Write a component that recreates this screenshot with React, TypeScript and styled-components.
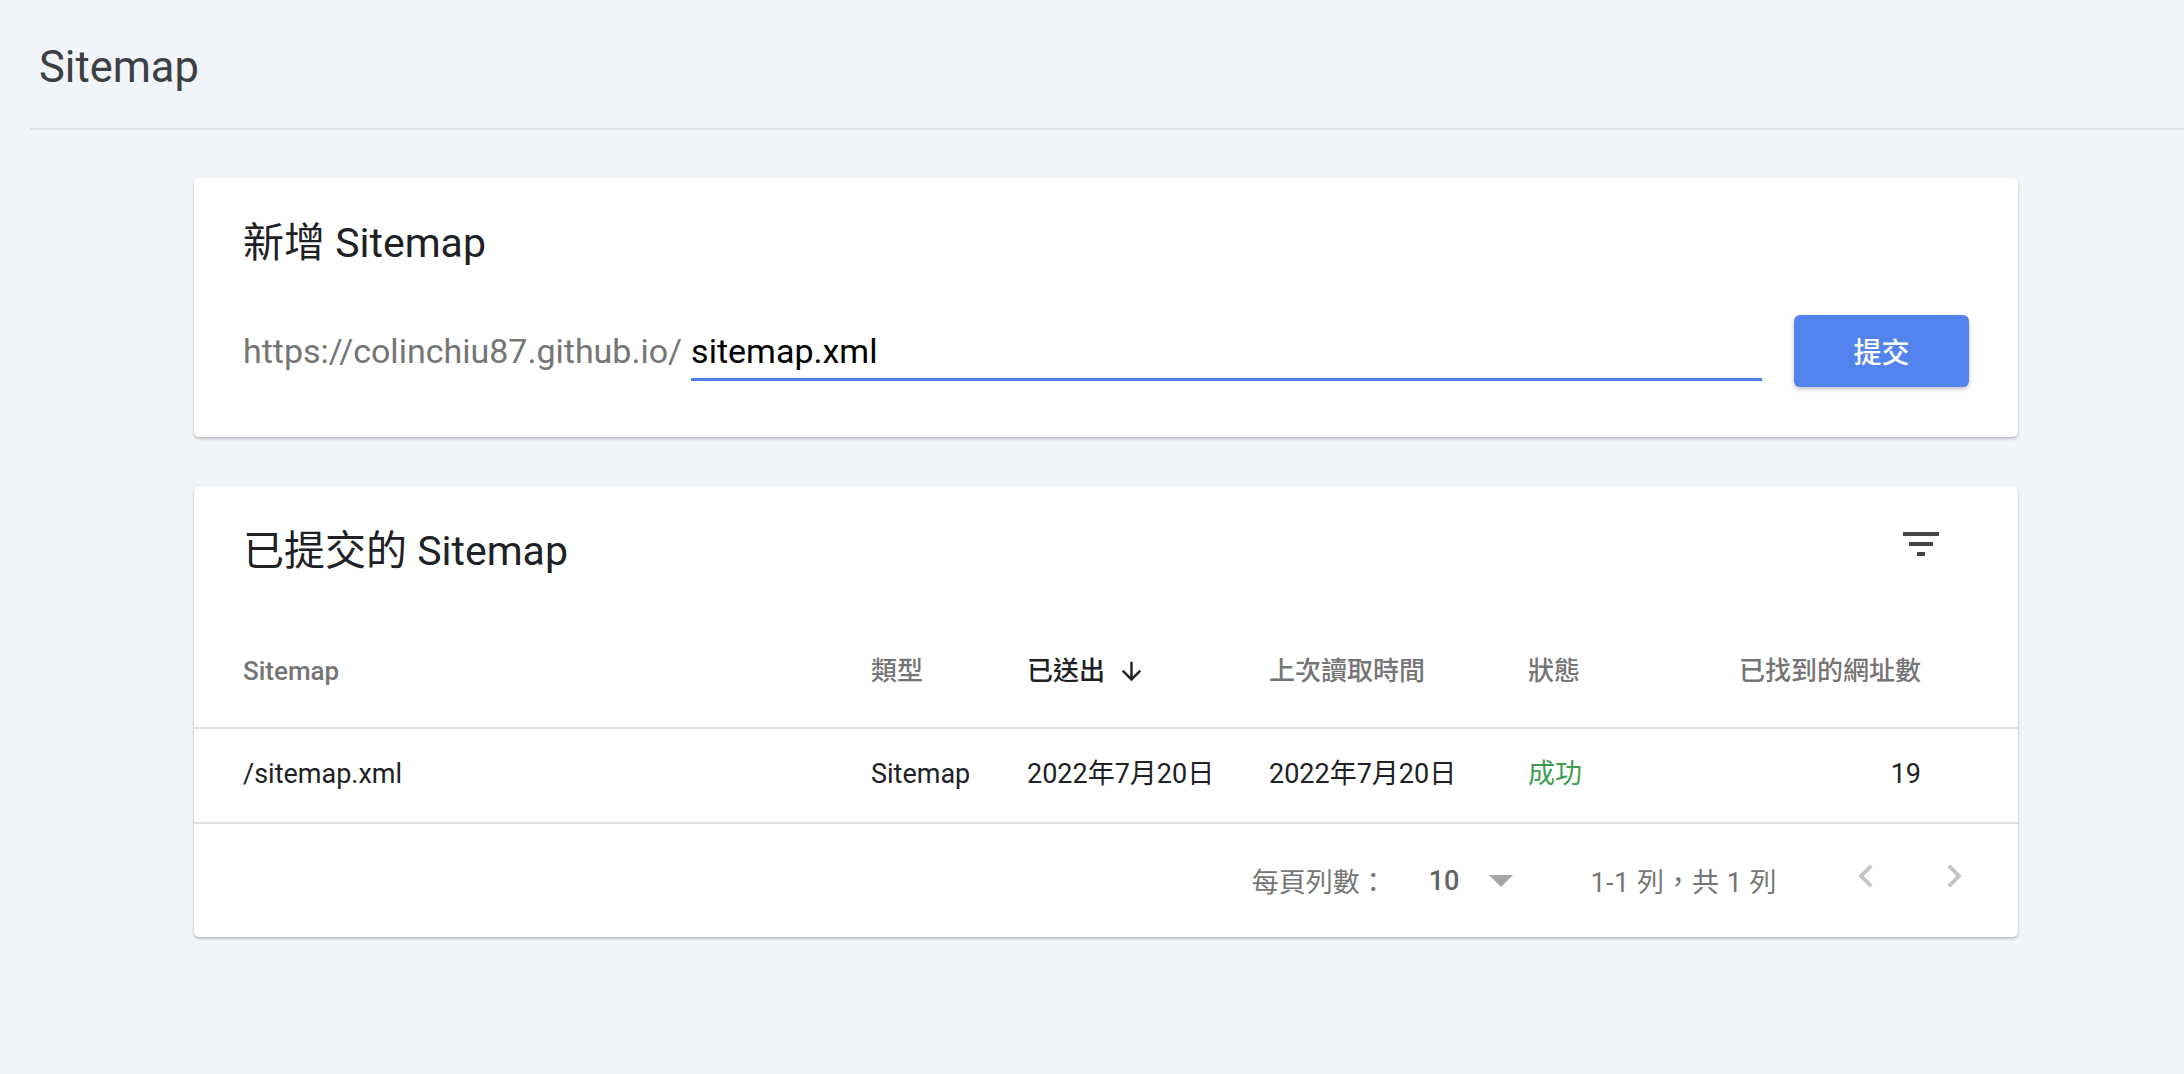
import styled, { createGlobalStyle } from "styled-components";

const GlobalStyle = createGlobalStyle`
    html, body {
        margin: 0;
        padding: 0;
        background: #f1f4f9;
    }
    body {
        font-family: Roboto, "Noto Sans CJK TC", sans-serif;
        color: #202124;
    }
`;

const Page = styled.div`
    min-height: 100vh;
    background: #f1f4f9;
`;

const TopBar = styled.header`
    margin-left: 30px;
    padding: 43px 0 36px 9px;
    border-bottom: 2px solid #dfe1e5;

    h1 {
        margin: 0;
        font-size: 43.5px;
        line-height: 49px;
        font-weight: 400;
        color: #3c4043;
    }
`;

const Main = styled.main`
    display: flex;
    flex-direction: column;
    gap: 49px;
    padding: 48px 0 0 194px;
`;

const Card = styled.section<{ $pad?: string }>`
    width: 1824px;
    box-sizing: border-box;
    background: #fff;
    border-radius: 5px;
    box-shadow: 0 2px 3px rgba(60, 64, 67, 0.28), 0 0 2px rgba(60, 64, 67, 0.08);
    padding: ${p => p.$pad ?? "41px 0 0"};
`;

const Title = styled.h2`
    margin: 0;
    font-size: 41px;
    line-height: 48px;
    font-weight: 400;
    color: #202124;
`;

const SubmitRow = styled.div`
    display: flex;
    align-items: center;
    margin-top: 48px;
`;

const Field = styled.label`
    flex: 1;
    display: flex;
    align-items: baseline;
    margin-top: 10px;
`;

const Prefix = styled.span`
    font-size: 34px;
    line-height: 40px;
    color: #757575;
    margin-right: 9px;
    white-space: nowrap;
`;

const UrlInput = styled.input`
    flex: 1;
    min-width: 0;
    height: 40px;
    padding: 0 0 7px;
    border: none;
    border-bottom: 3px solid #4f80e9;
    outline: none;
    background: transparent;
    font-family: Roboto, sans-serif;
    font-size: 34px;
    line-height: 40px;
    color: #000;
`;

const SubmitButton = styled.button`
    width: 175px;
    height: 72px;
    margin-left: 32px;
    border: none;
    border-radius: 6px;
    background: #5383ec;
    color: #fff;
    font-family: Roboto, "Noto Sans CJK TC", sans-serif;
    font-size: 28px;
    font-weight: 500;
    box-shadow: 0 2px 4px rgba(0, 0, 0, 0.25);
    cursor: pointer;
`;

const TitleRow = styled.div`
    display: flex;
    justify-content: space-between;
    align-items: flex-start;
    padding: 0 73px 0 49px;
    margin-bottom: 40px;

    svg {
        margin-top: -7px;
        fill: #444;
    }
`;

const TableRow = styled.div`
    display: grid;
    grid-template-columns: 628px 156px 242px 259px 1fr 220px;
    align-items: center;
    padding: 0 97px 0 49px;
    border-bottom: 2px solid #e0e0e0;
`;

const HeadCell = styled.div<{ $active?: boolean; $right?: boolean }>`
    display: flex;
    align-items: center;
    justify-content: ${p => (p.$right ? "flex-end" : "flex-start")};
    padding: 40px 0;
    font-size: 26px;
    line-height: 32px;
    font-weight: 500;
    color: ${p => (p.$active ? "#202124" : "#757575")};
    white-space: nowrap;

    svg {
        margin-left: 12px;
        fill: #202124;
    }
`;

const DataCell = styled.div<{ $right?: boolean; $color?: string }>`
    padding: 29px 0 31px;
    font-size: 27px;
    line-height: 33px;
    color: ${p => p.$color ?? "#202124"};
    text-align: ${p => (p.$right ? "right" : "left")};
    white-space: nowrap;
`;

const Footer = styled.div`
    display: flex;
    justify-content: flex-end;
    align-items: center;
    height: 113px;
    padding-right: 41px;
    font-size: 27px;
    color: #757575;
    white-space: nowrap;
`;

const PageSize = styled.span`
    margin-left: 42px;
    font-weight: 500;
    color: #5f6368;
`;

const Caret = styled.span`
    margin-left: 30px;
    width: 0;
    height: 0;
    border-left: 12.5px solid transparent;
    border-right: 12.5px solid transparent;
    border-top: 12px solid #a6a6a6;
`;

const Range = styled.span`
    margin-left: 77px;
    letter-spacing: 0.5px;
`;

const PageButton = styled.button<{ $gap: number }>`
    display: flex;
    margin-left: ${p => p.$gap}px;
    margin-bottom: 9px;
    padding: 0;
    border: none;
    background: none;

    svg {
        fill: #c4c4c4;
    }
`;

const columns = [
    { label: "Sitemap" },
    { label: "類型" },
    { label: "已送出", active: true },
    { label: "上次讀取時間" },
    { label: "狀態" },
    { label: "已找到的網址數", right: true },
];

const rows = [
    {
        path: "/sitemap.xml",
        type: "Sitemap",
        sent: "2022年7月20日",
        read: "2022年7月20日",
        status: "成功",
        found: 19,
    },
];

export default function App() {
    return (
        <Page>
            <GlobalStyle />
            <TopBar>
                <h1>Sitemap</h1>
            </TopBar>
            <Main>
                <Card $pad="41px 49px 50px">
                    <Title>新增 Sitemap</Title>
                    <SubmitRow>
                        <Field>
                            <Prefix>https://colinchiu87.github.io/</Prefix>
                            <UrlInput type="text" defaultValue="sitemap.xml" />
                        </Field>
                        <SubmitButton>提交</SubmitButton>
                    </SubmitRow>
                </Card>

                <Card>
                    <TitleRow>
                        <Title>已提交的 Sitemap</Title>
                        <svg width={48} height={48} viewBox="0 0 24 24">
                            <path d="M10 18h4v-2h-4v2zM3 6v2h18V6H3zm3 7h12v-2H6v2z" />
                        </svg>
                    </TitleRow>
                    <TableRow>
                        {columns.map(col => (
                            <HeadCell key={col.label} $active={col.active} $right={col.right}>
                                {col.label}
                                {col.active && (
                                    <svg width={29} height={29} viewBox="0 0 24 24">
                                        <path d="M20 12l-1.41-1.41L13 16.17V4h-2v12.17l-5.58-5.59L4 12l8 8 8-8z" />
                                    </svg>
                                )}
                            </HeadCell>
                        ))}
                    </TableRow>
                    {rows.map(row => (
                        <TableRow key={row.path}>
                            <DataCell>{row.path}</DataCell>
                            <DataCell>{row.type}</DataCell>
                            <DataCell>{row.sent}</DataCell>
                            <DataCell>{row.read}</DataCell>
                            <DataCell $color="#3c9c52">{row.status}</DataCell>
                            <DataCell $right>{row.found}</DataCell>
                        </TableRow>
                    ))}
                    <Footer>
                        <span>每頁列數：</span>
                        <PageSize>10</PageSize>
                        <Caret />
                        <Range>1-1 列，共 1 列</Range>
                        <PageButton $gap={66} aria-label="上一頁">
                            <svg width={46} height={46} viewBox="0 0 24 24">
                                <path d="M15.41 7.41L14 6l-6 6 6 6 1.41-1.41L10.83 12z" />
                            </svg>
                        </PageButton>
                        <PageButton $gap={42} aria-label="下一頁">
                            <svg width={46} height={46} viewBox="0 0 24 24">
                                <path d="M10 6L8.59 7.41 13.17 12l-4.58 4.59L10 18l6-6z" />
                            </svg>
                        </PageButton>
                    </Footer>
                </Card>
            </Main>
        </Page>
    );
}
